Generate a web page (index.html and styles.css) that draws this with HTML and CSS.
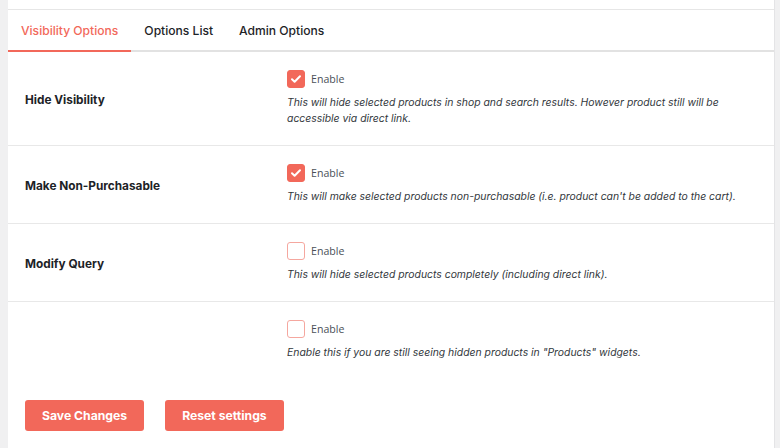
FILE: index.html
```html
<!DOCTYPE html>
<html>
<head>
<meta charset="utf-8">
<link rel="stylesheet" href="styles.css">
</head>
<body>
<div class="page">
  <div class="panel">
    <div class="topstrip"></div>
    <nav class="tabs">
      <a class="tab active">Visibility Options</a>
      <a class="tab">Options List</a>
      <a class="tab">Admin Options</a>
    </nav>
    <div class="rows">
      <div class="row">
        <div class="label">Hide Visibility</div>
        <div class="control">
          <label class="check"><span class="box on"><svg viewBox="0 0 18 18" width="18" height="18"><path d="M5 9.3l2.6 2.5L13 6.3" fill="none" stroke="#fff" stroke-width="2" stroke-linecap="round" stroke-linejoin="round"/></svg></span><span class="check-text">Enable</span></label>
          <p class="desc">This will hide selected products in shop and search results. However product still will be accessible via direct link.</p>
        </div>
      </div>
      <div class="row">
        <div class="label">Make Non-Purchasable</div>
        <div class="control">
          <label class="check"><span class="box on"><svg viewBox="0 0 18 18" width="18" height="18"><path d="M5 9.3l2.6 2.5L13 6.3" fill="none" stroke="#fff" stroke-width="2" stroke-linecap="round" stroke-linejoin="round"/></svg></span><span class="check-text">Enable</span></label>
          <p class="desc">This will make selected products non-purchasable (i.e. product can't be added to the cart).</p>
        </div>
      </div>
      <div class="row">
        <div class="label">Modify Query</div>
        <div class="control">
          <label class="check"><span class="box"></span><span class="check-text">Enable</span></label>
          <p class="desc">This will hide selected products completely (including direct link).</p>
        </div>
      </div>
      <div class="row last">
        <div class="label"></div>
        <div class="control">
          <label class="check"><span class="box"></span><span class="check-text">Enable</span></label>
          <p class="desc">Enable this if you are still seeing hidden products in "Products" widgets.</p>
        </div>
      </div>
    </div>
    <div class="actions">
      <button class="btn">Save Changes</button>
      <button class="btn">Reset settings</button>
    </div>
  </div>
</div>
</body>
</html>
```
FILE: styles.css
```css
html, body {
  margin: 0;
  padding: 0;
  background: #f0f0f1;
  height: 100%;
  overflow: hidden;
}
.page {
  padding-left: 8px;
  padding-right: 5px;
  height: 448px;
}
.panel {
  background: #fff;
  border-right: 1px solid #e4e4e6;
  height: 100%;
  font-family: Inter, "Liberation Sans", sans-serif;
  color: #1d2327;
}
.topstrip {
  height: 9px;
  border-bottom: 1px solid #e6e6e6;
}
.tabs {
  display: flex;
  height: 40px;
  border-bottom: 2px solid #e2e2e2;
}
.tab {
  display: flex;
  align-items: center;
  padding: 0 13px;
  font-size: 12.1px;
  font-weight: 500;
  color: #1d2327;
  margin-bottom: -2px;
  border-bottom: 2px solid transparent;
}
.tab.active {
  color: #f2685a;
  border-bottom-color: #f2685a;
}
.row {
  display: grid;
  grid-template-columns: 262px 1fr;
  align-items: center;
  padding: 18px 17px 18px;
  border-bottom: 1px solid #e8e8e8;
}
.row.last { border-bottom: 0; }
.label {
  font-size: 11.8px;
  font-weight: 700;
  padding-top: 3px;
}
.control { min-width: 0; }
.check {
  display: flex;
  align-items: center;
  height: 18px;
}
.box {
  width: 16px;
  height: 16px;
  border: 1px solid #f5a79f;
  border-radius: 3px;
  background: #fff;
  display: flex;
  align-items: center;
  justify-content: center;
  overflow: hidden;
}
.box.on {
  background: #f2685a;
  border-color: #f2685a;
}
.box svg { flex: none; }
.check-text {
  margin-left: 6px;
  font-family: "Open Sans", sans-serif;
  font-size: 10.6px;
  color: #4a5057;
}
.desc {
  margin: 7px 0 0;
  font-size: 10.4px;
  line-height: 16px;
  font-style: italic;
  color: #32373c;
}
.actions {
  display: flex;
  gap: 21px;
  padding: 21px 17px 0;
}
.btn {
  font-family: Inter, "Liberation Sans", sans-serif;
  font-size: 12.2px;
  font-weight: 700;
  color: #fff;
  background: #f2685a;
  border: 0;
  border-radius: 3px;
  height: 31px;
  padding: 0 17px;
}
```
